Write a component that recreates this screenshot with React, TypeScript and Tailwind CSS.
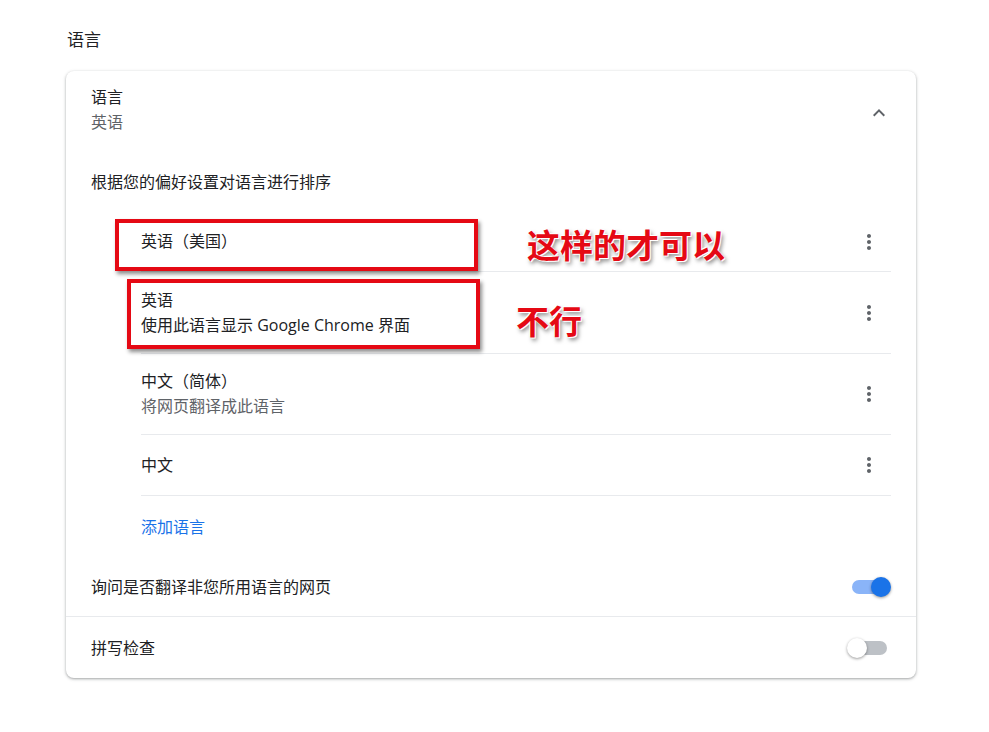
const FONT = "font-['Segoe_UI','Open_Sans','Noto_Sans_CJK_SC',sans-serif]";

function MoreIcon() {
  return (
    <svg viewBox="0 0 24 24" className="w-6 h-6 fill-[#5f6368]">
      <path d="M12 8c1.1 0 2-.9 2-2s-.9-2-2-2-2 .9-2 2 .9 2 2 2zm0 2c-1.1 0-2 .9-2 2s.9 2 2 2 2-.9 2-2-.9-2-2-2zm0 6c-1.1 0-2 .9-2 2s.9 2 2 2 2-.9 2-2-.9-2-2-2z" />
    </svg>
  );
}

const languages = [
  { name: "英语（美国）", h: "h-[60px]" },
  { name: "英语", sub: "使用此语言显示 Google Chrome 界面", subDark: true, h: "h-[82px]" },
  { name: "中文（简体）", sub: "将网页翻译成此语言", h: "h-[81px]" },
  { name: "中文", h: "h-[61px]" },
];

export default function App() {
  return (
    <div className={`relative w-[989px] h-[732px] bg-white ${FONT} text-[#202124]`}>
      <div className="pl-[66px] pt-[27px] w-[916px]">
        <h2 className="text-[17px] leading-[26px] pl-[1px]">语言</h2>

        {/* Card */}
        <div className="mt-[18px] w-[850px] rounded-[8px] bg-white shadow-[0_1px_2px_rgba(60,64,67,0.3),0_1px_3px_1px_rgba(60,64,67,0.15)]">
          <div className="px-[25px]">
            <div className="flex items-center justify-between h-[81px] pb-[3px]">
              <div className="text-[16px] leading-[25px]">
                <div>语言</div>
                <div className="text-[#5f6368]">英语</div>
              </div>
              <div className="w-[24px] flex justify-center mt-[5px]">
                <svg viewBox="0 0 24 24" className="w-[26px] h-[26px] fill-[#5f6368]">
                  <path d="M12 8l-6 6 1.41 1.41L12 10.83l4.59 4.58L18 14z" />
                </svg>
              </div>
            </div>

            <div className="h-[60px] flex items-center text-[16px]">根据您的偏好设置对语言进行排序</div>

            <ul className="ml-[50px]">
              {languages.map((l) => (
                <li
                  key={l.name}
                  className={`${l.h} flex items-center justify-between border-b border-[#e8eaed] text-[16px] leading-[25px]`}
                >
                  <div>
                    <div>{l.name}</div>
                    {l.sub && <div className={l.subDark ? "" : "text-[#5f6368]"}>{l.sub}</div>}
                  </div>
                  <div className="w-[44px] flex justify-center">
                    <MoreIcon />
                  </div>
                </li>
              ))}
            </ul>

            <div className="ml-[50px] h-[61px] flex items-center text-[16px] text-[#1a73e8]">添加语言</div>

            <div className="h-[59px] flex items-center justify-between text-[16px]">
              <span>询问是否翻译非您所用语言的网页</span>
              <div className="relative w-[40px] h-[20px]">
                <div className="absolute left-[1px] right-[4px] top-[3px] h-[14px] rounded-full bg-[#8ab4f8]" />
                <div className="absolute right-0 top-0 w-[20px] h-[20px] rounded-full bg-[#1a73e8] shadow-[0_1px_3px_rgba(0,0,0,0.4)]" />
              </div>
            </div>
          </div>

          <div className="border-t border-[#e8eaed] px-[25px] h-[62px] flex items-center justify-between text-[16px]">
            <span>拼写检查</span>
            <div className="relative w-[44px] h-[20px]">
              <div className="absolute left-[1px] right-[4px] top-[3px] h-[14px] rounded-full bg-[#bdc1c6]" />
              <div className="absolute left-0 top-0 w-[20px] h-[20px] rounded-full bg-white shadow-[0_1px_3px_rgba(0,0,0,0.4)]" />
            </div>
          </div>
        </div>
      </div>

      {/* Annotations */}
      <div className="absolute left-[115px] top-[219px] w-[363px] h-[52px] border-[4px] border-[#e50914] shadow-[2px_3px_4px_rgba(0,0,0,0.45)]" />
      <div className="absolute left-[127px] top-[279px] w-[353px] h-[70px] border-[4px] border-[#e50914] shadow-[2px_3px_4px_rgba(0,0,0,0.45)]" />
      <div className="absolute left-[527px] top-[224px] text-[33px] leading-[40px] font-semibold text-[#e50914] font-['Noto_Sans_CJK_SC',sans-serif] [text-shadow:0_0_2px_#fff,1px_1px_0_#fff,-1px_-1px_0_#fff,2px_3px_4px_rgba(0,0,0,0.5)]">
        这样的才可以
      </div>
      <div className="absolute left-[516px] top-[300px] text-[33px] leading-[40px] font-semibold text-[#e50914] font-['Noto_Sans_CJK_SC',sans-serif] [text-shadow:0_0_2px_#fff,1px_1px_0_#fff,-1px_-1px_0_#fff,2px_3px_4px_rgba(0,0,0,0.5)]">
        不行
      </div>
    </div>
  );
}
